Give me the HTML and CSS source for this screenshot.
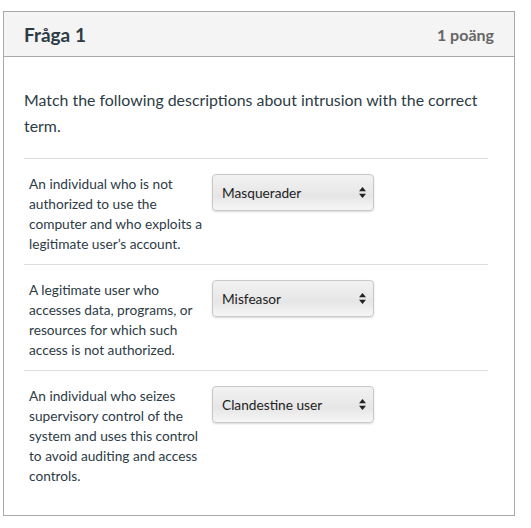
FILE: index.html
```html
<!DOCTYPE html>
<html>
<head>
<meta charset="utf-8">
<link rel="stylesheet" href="styles.css">
</head>
<body>
<div class="question">
  <div class="q-header">
    <h2 class="q-title">Fråga 1</h2>
    <span class="q-points">1 poäng</span>
  </div>
  <div class="q-body">
    <p class="q-text">Match the following descriptions about intrusion with the correct term.</p>
    <div class="match-list">
      <div class="match-row">
        <div class="match-desc">An individual who is not authorized to use the computer and who exploits a legitimate user’s account.</div>
        <div class="select"><span>Masquerader</span><svg class="arrows" width="7" height="11" viewBox="0 0 7 11"><path d="M3.5 0 L7 4.2 L0 4.2 Z M3.5 11 L7 6.8 L0 6.8 Z" fill="#222"/></svg></div>
      </div>
      <div class="match-row">
        <div class="match-desc">A legitimate user who accesses data, programs, or resources for which such access is not authorized.</div>
        <div class="select"><span>Misfeasor</span><svg class="arrows" width="7" height="11" viewBox="0 0 7 11"><path d="M3.5 0 L7 4.2 L0 4.2 Z M3.5 11 L7 6.8 L0 6.8 Z" fill="#222"/></svg></div>
      </div>
      <div class="match-row">
        <div class="match-desc">An individual who seizes supervisory control of the system and uses this control to avoid auditing and access controls.</div>
        <div class="select"><span>Clandestine user</span><svg class="arrows" width="7" height="11" viewBox="0 0 7 11"><path d="M3.5 0 L7 4.2 L0 4.2 Z M3.5 11 L7 6.8 L0 6.8 Z" fill="#222"/></svg></div>
      </div>
    </div>
  </div>
</div>
</body>
</html>
```
FILE: styles.css
```css
* { box-sizing: border-box; }
body {
  margin: 0;
  padding: 11px 17px 0 3px;
  background: #fff;
  font-family: Lato, "Open Sans", sans-serif;
  color: #2d3b45;
}
.question {
  width: 512px;
  border: 1px solid #aaaaaa;
  background: #fff;
}
.q-header {
  display: flex;
  justify-content: space-between;
  align-items: center;
  height: 45px;
  padding: 0 20px 0 20px;
  background: #f4f4f4;
  border-bottom: 1px solid #aaaaaa;
}
.q-title {
  margin: 0;
  font-size: 19px;
  font-weight: bold;
  color: #2d3b45;
}
.q-points {
  font-size: 16px;
  font-weight: bold;
  color: #666666;
}
.q-body {
  padding: 30px 26px 0 20px;
}
.q-text {
  margin: 0 0 19px 0;
  font-size: 15.9px;
  line-height: 26px;
  color: #2d3b45;
}
.match-row {
  display: flex;
  align-items: flex-start;
  border-top: 1px solid #dddddd;
  padding: 15px 0 10px 5px;
}
.match-row:last-child {
  padding-bottom: 29px;
}
.match-desc {
  width: 181px;
  font-size: 13.7px;
  line-height: 20px;
  color: #2d3b45;
}
.select {
  display: flex;
  align-items: center;
  justify-content: space-between;
  width: 162px;
  height: 37px;
  margin-left: 2px;
  padding: 0 7px 0 9px;
  border: 1px solid #c8c8c8;
  border-radius: 4px;
  background: linear-gradient(#f2f2f2, #e6e6e6 60%, #f6f6f6);
  box-shadow: 0 1px 2px rgba(0,0,0,0.15);
  font-size: 13.7px;
  color: #222;
}
.arrows { display: block; }
```
